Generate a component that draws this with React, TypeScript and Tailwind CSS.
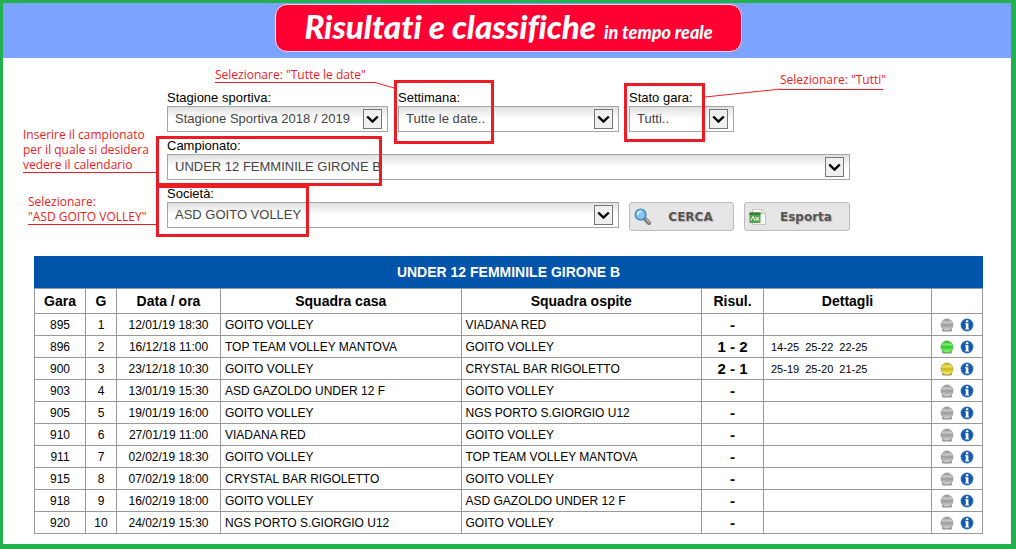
import React from "react";

type Status = "grey" | "green" | "yellow";

interface Match {
  gara: number;
  g: number;
  date: string;
  home: string;
  away: string;
  result: string;
  sets: string[];
  status: Status;
}

const matches: Match[] = [
  { gara: 895, g: 1, date: "12/01/19 18:30", home: "GOITO VOLLEY", away: "VIADANA RED", result: "-", sets: [], status: "grey" },
  { gara: 896, g: 2, date: "16/12/18 11:00", home: "TOP TEAM VOLLEY MANTOVA", away: "GOITO VOLLEY", result: "1 - 2", sets: ["14-25", "25-22", "22-25"], status: "green" },
  { gara: 900, g: 3, date: "23/12/18 10:30", home: "GOITO VOLLEY", away: "CRYSTAL BAR RIGOLETTO", result: "2 - 1", sets: ["25-19", "25-20", "21-25"], status: "yellow" },
  { gara: 903, g: 4, date: "13/01/19 15:30", home: "ASD GAZOLDO UNDER 12 F", away: "GOITO VOLLEY", result: "-", sets: [], status: "grey" },
  { gara: 905, g: 5, date: "19/01/19 16:00", home: "GOITO VOLLEY", away: "NGS PORTO S.GIORGIO U12", result: "-", sets: [], status: "grey" },
  { gara: 910, g: 6, date: "27/01/19 11:00", home: "VIADANA RED", away: "GOITO VOLLEY", result: "-", sets: [], status: "grey" },
  { gara: 911, g: 7, date: "02/02/19 18:30", home: "GOITO VOLLEY", away: "TOP TEAM VOLLEY MANTOVA", result: "-", sets: [], status: "grey" },
  { gara: 915, g: 8, date: "07/02/19 18:00", home: "CRYSTAL BAR RIGOLETTO", away: "GOITO VOLLEY", result: "-", sets: [], status: "grey" },
  { gara: 918, g: 9, date: "16/02/19 18:00", home: "GOITO VOLLEY", away: "ASD GAZOLDO UNDER 12 F", result: "-", sets: [], status: "grey" },
  { gara: 920, g: 10, date: "24/02/19 15:30", home: "NGS PORTO S.GIORGIO U12", away: "GOITO VOLLEY", result: "-", sets: [], status: "grey" },
];

const ballColors: Record<Status, { dark: string; mid: string; light: string }> = {
  grey: { dark: "#8a8a8a", mid: "#9c9c9c", light: "#c9c9c9" },
  green: { dark: "#27a81f", mid: "#35c42b", light: "#7cf06c" },
  yellow: { dark: "#ad9c1a", mid: "#c9b722", light: "#efe45c" },
};

function StatusBall({ status }: { status: Status }) {
  const c = ballColors[status];
  const id = `ball-${status}`;
  return (
    <svg width="14" height="14" viewBox="0 0 14 14" role="img" aria-label={status}>
      <defs>
        <linearGradient id={id} x1="0" y1="0" x2="0" y2="1">
          <stop offset="0" stopColor={c.dark} />
          <stop offset="0.3" stopColor={c.light} />
          <stop offset="0.5" stopColor={c.mid} />
          <stop offset="0.85" stopColor={c.light} />
          <stop offset="1" stopColor={c.light} />
        </linearGradient>
      </defs>
      <rect x="2" y="10.5" width="10" height="3" rx="1.5" fill="#444" opacity="0.6" />
      <circle cx="7" cy="6.9" r="6" fill={`url(#${id})`} stroke={c.dark} strokeWidth="0.6" />
    </svg>
  );
}

function InfoIcon() {
  return (
    <svg width="14" height="14" viewBox="0 0 14 14" role="img" aria-label="info">
      <circle cx="7" cy="7" r="6.4" fill="#2a6db8" />
      <circle cx="7" cy="7" r="5.2" fill="#1558a8" />
      <rect x="5.8" y="2.3" width="2.6" height="2" rx="0.6" fill="#fff" />
      <path d="M5 5.2h3.4v5.2h0.7v1H5.2v-1h0.6V6.2H5z" fill="#fff" />
    </svg>
  );
}

function SearchIcon() {
  return (
    <svg width="18" height="18" viewBox="0 0 18 18" aria-hidden="true">
      <path d="M11 11l4 4" stroke="#777" strokeWidth="4" strokeLinecap="round" />
      <path d="M12.4 11.6l2.8 2.8" stroke="#b5b5b5" strokeWidth="1.4" strokeLinecap="round" />
      <circle cx="6.6" cy="6.6" r="5.2" fill="#8cc6f0" stroke="#4a8fc7" strokeWidth="1.8" />
      <path d="M3.6 6.4a3.3 3.3 0 0 1 3.4-3" fill="none" stroke="#dff1ff" strokeWidth="1.6" strokeLinecap="round" />
    </svg>
  );
}

function SheetIcon() {
  return (
    <svg width="18" height="18" viewBox="0 0 18 18" aria-hidden="true">
      <path d="M3.5 1.5h10l3 3v12h-13z" fill="#fafafa" stroke="#c4c4c4" />
      <path d="M12.5 1.5v4h4" fill="#e6e6e6" stroke="#c4c4c4" />
      <rect x="0.5" y="4.5" width="11" height="10.5" fill="#55a04c" />
      <rect x="0.5" y="4.5" width="11" height="2.4" fill="#357f30" />
      <path d="M2 12.6l2-4 2 4M6.4 8.8l3.6 3.8M10 8.8l-3.6 3.8" fill="none" stroke="#dff3dc" strokeWidth="1.1" />
    </svg>
  );
}

function SelectField({ id, label, value, className }: { id: string; label: string; value: string; className?: string }) {
  return (
    <div className={className}>
      <label htmlFor={id} className="block whitespace-nowrap text-[13px] leading-4 text-black">
        {label}
      </label>
      <div className="relative">
        <select
          id={id}
          className="block h-[26px] w-full appearance-none border border-[#a5a5a5] bg-white bg-linear-to-b from-[#e0e0e0] to-white to-50% pr-7 pl-[7px] text-[13px] text-[#444]"
        >
          <option>{value}</option>
        </select>
        <span className="pointer-events-none absolute top-[3px] right-[6px] flex h-5 w-[19px] items-center justify-center border border-[#777] bg-[#f0f0f0]">
          <svg width="13" height="9" viewBox="0 0 13 9" aria-hidden="true">
            <path d="M1.2 1.5l5.3 5 5.3-5" fill="none" stroke="#000" strokeWidth="2.4" />
          </svg>
        </span>
      </div>
    </div>
  );
}

function ActionButton({ icon, children }: { icon: React.ReactNode; children: React.ReactNode }) {
  return (
    <button
      type="button"
      className="mt-4 flex h-[29px] items-center rounded-[3px] border border-[#bcbcbc] bg-[#e6e6e6] pl-1 font-['DejaVu_Sans',sans-serif] text-xs font-bold text-[#555] text-shadow-[1px_1px_1px_#bbbbbb]"
    >
      {icon}
      <span className="flex-1 pr-1 text-center">{children}</span>
    </button>
  );
}

const note = "absolute whitespace-nowrap border-[#ed1c24] font-['Open_Sans',sans-serif] text-xs leading-[15px] text-[#ed1c24]";
const frame = "pointer-events-none absolute border-3 border-[#ed1c24]";

function Annotations() {
  return (
    <>
      <div className={`${frame} top-[22px] left-[227px] h-16 w-[100px]`} />
      <div className={`${frame} top-[25px] left-[457px] h-[59px] w-[81px]`} />
      <div className={`${frame} top-[78px] -left-[11px] h-[50px] w-[226px]`} />
      <div className={`${frame} top-[127px] -left-[11px] h-[52px] w-[153px]`} />

      <p className={`${note} top-[9px] left-12 w-40 border-b`}>Selezionare: "Tutte le date"</p>
      <svg className="absolute top-6 left-[208px]" width="19" height="7" viewBox="0 0 19 7" aria-hidden="true">
        <path d="M0 .5L19 6" stroke="#ed1c24" fill="none" />
      </svg>

      <p className={`${note} top-[14px] left-[613px] w-[103px] border-b pb-[2px]`}>Selezionare: "Tutti"</p>
      <svg className="absolute top-[30px] left-[538px]" width="76" height="10" viewBox="0 0 76 10" aria-hidden="true">
        <path d="M0 9L76 1" stroke="#ed1c24" fill="none" />
      </svg>

      <p className={`${note} top-[69px] -left-[144px] w-[133px] border-b`}>
        Inserire il campionato
        <br />
        per il quale si desidera
        <br />
        vedere il calendario
      </p>
      <p className={`${note} top-[136px] -left-[139px] w-32 border-b`}>
        Selezionare:
        <br />
        "ASD GOITO VOLLEY"
      </p>
    </>
  );
}

const cell = "border border-[#999] p-0";

export default function App() {
  return (
    <div className="min-h-screen border-t-3 border-r-5 border-b-5 border-l-3 border-[#22b14c] bg-white font-['Liberation_Sans',Arial,sans-serif] text-black">
      <header className="flex h-[55px] justify-center bg-[#7ba3ff] pt-px pl-[3px]">
        <h1 className="flex h-12 w-[467px] items-baseline justify-center gap-2 rounded-xl border border-[#ffd9e4] bg-[#ff0033] font-['Lato',sans-serif] leading-[42px] font-black whitespace-nowrap text-white italic [font-variant-ligatures:none]">
          <span className="text-[33px]">Risultati e classifiche</span>
          <span className="text-lg leading-none">in tempo reale</span>
        </h1>
      </header>

      <main className="pr-[28px] pb-[9px] pl-[31px]">
        <form className="relative mx-auto max-w-[683px] pt-8" onSubmit={(e) => e.preventDefault()}>
          <div className="grid grid-cols-[221fr_221fr_105fr_106fr] items-start gap-x-[10px] gap-y-[6px]">
            <SelectField id="stagione" label="Stagione sportiva:" value="Stagione Sportiva 2018 / 2019" />
            <SelectField id="settimana" label="Settimana:" value="Tutte le date.." />
            <SelectField id="stato" label="Stato gara:" value="Tutti.." />
            <SelectField id="campionato" label="Campionato:" value="UNDER 12 FEMMINILE GIRONE B" className="col-span-4" />
            <SelectField id="societa" label="Società:" value="ASD GOITO VOLLEY" className="col-span-2" />
            <ActionButton icon={<SearchIcon />}>CERCA</ActionButton>
            <ActionButton icon={<SheetIcon />}>Esporta</ActionButton>
          </div>
          <Annotations />
        </form>

        <table className="mt-[25px] w-full table-fixed border-collapse text-xs">
          <caption className="h-8 bg-[#0055aa] text-sm leading-8 font-bold text-white">UNDER 12 FEMMINILE GIRONE B</caption>
          <colgroup>
            <col className="w-[51px]" />
            <col className="w-[31px]" />
            <col className="w-[104px]" />
            <col />
            <col />
            <col className="w-[62px]" />
            <col className="w-[168px]" />
            <col className="w-[51px]" />
          </colgroup>
          <thead>
            <tr className="h-[25px] text-sm">
              {["Gara", "G", "Data / ora", "Squadra casa", "Squadra ospite", "Risul.", "Dettagli", ""].map((h, i) => (
                <th key={i} className={cell}>
                  {h}
                </th>
              ))}
            </tr>
          </thead>
          <tbody>
            {matches.map((m) => (
              <tr key={m.gara} className="h-[22px] leading-4">
                <td className={`${cell} text-center`}>{m.gara}</td>
                <td className={`${cell} text-center`}>{m.g}</td>
                <td className={`${cell} text-center`}>{m.date}</td>
                <td className={`${cell} pl-1`}>{m.home}</td>
                <td className={`${cell} pl-1`}>{m.away}</td>
                <td className={`${cell} text-center text-[15px] font-bold`}>{m.result}</td>
                <td className={`${cell} pl-[7px] text-[11px]`}>
                  <span className="flex gap-[6px]">
                    {m.sets.map((s) => (
                      <span key={s}>{s}</span>
                    ))}
                  </span>
                </td>
                <td className={cell}>
                  <span className="flex items-center justify-center gap-[6px]">
                    <StatusBall status={m.status} />
                    <InfoIcon />
                  </span>
                </td>
              </tr>
            ))}
          </tbody>
        </table>
      </main>
    </div>
  );
}
